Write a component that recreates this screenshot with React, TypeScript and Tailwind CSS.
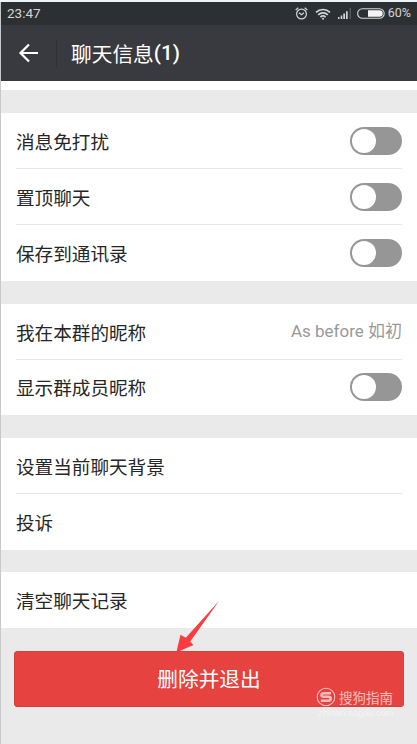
import type { ReactNode } from "react";

const cjk = "font-['Noto_Sans_CJK_SC',sans-serif]";
const latin = "font-[Roboto,'Noto_Sans_CJK_SC',sans-serif]";

function Toggle() {
  return (
    <span className="flex h-7 w-[52px] items-center rounded-full bg-[#969696] pl-0.5">
      <span className="size-6 rounded-full bg-white" />
    </span>
  );
}

function Row({ label, last, children }: { label: string; last?: boolean; children?: ReactNode }) {
  return (
    <div
      className={
        "flex h-14 items-center justify-between " + (last ? "" : "border-b border-[#e6e6e6]")
      }
    >
      <span className="whitespace-nowrap text-[18.6px] leading-7 text-[#262626]">{label}</span>
      {children}
    </div>
  );
}

function Group({ children }: { children: ReactNode }) {
  return <section className="bg-white pl-4 pr-[15px]">{children}</section>;
}

function StatusBar() {
  return (
    <div className={"flex h-[23px] items-center justify-between bg-[#2d3033] pl-[7px] pr-1.5 text-[#d5d5d5] " + latin}>
      <span className="text-[13.5px] leading-none">23:47</span>
      <div className="flex items-center">
        <svg width="13" height="13" viewBox="0 0 13 13" fill="none" stroke="currentColor" strokeWidth="1.2">
          <circle cx="6.5" cy="7" r="4.9" />
          <path d="M.7 3 3.3.8M12.3 3 9.7.8M4 5.7l2.5 2 2.4-2" />
        </svg>
        <svg className="ml-[7px]" width="16" height="12" viewBox="0 0 16 12" fill="none" stroke="currentColor" strokeWidth="1.6">
          <path d="M1 4.3a10.2 10.2 0 0 1 14 0M3.2 6.8a7 7 0 0 1 9.6 0M5.4 9.1a3.9 3.9 0 0 1 5.2 0" />
          <circle cx="8" cy="10.7" r="1" fill="currentColor" stroke="none" />
        </svg>
        <svg className="ml-[7px]" width="14" height="11" viewBox="0 0 14 11" fill="currentColor">
          <path d="M0 9h1.5v2H0zM2.7 7.5h1.6V11H2.7zM5.3 5.5H7V11H5.3zM8 3.2h1.7V11H8z" />
          <path d="M11.5 0H13v11h-1.5z" fill="#55585b" />
        </svg>
        <svg className="ml-[5px]" width="28" height="11" viewBox="0 0 28 11" fill="none">
          <rect x=".6" y=".8" width="26.6" height="9.4" rx="4.7" stroke="currentColor" strokeWidth="1.1" />
          <path d="M11 2.3h11.5a3.2 3.2 0 0 1 0 6.4H11z" fill="#f4f4f4" />
        </svg>
        <span className="ml-[3px] text-[12.5px] leading-none">60%</span>
      </div>
    </div>
  );
}

function Header() {
  return (
    <header className="flex h-14 items-center bg-[#393a3f] pl-[18px] text-white">
      <svg width="21" height="20" viewBox="0 0 21 20" fill="none" stroke="currentColor" strokeWidth="2.2">
        <path d="M20 10H2.5M11 1.5 2.5 10l8.5 8.5" />
      </svg>
      <span className="ml-[17px] h-7 w-px bg-[#303136]" />
      <h1 className="ml-3.5 flex items-center whitespace-nowrap text-[20.7px] leading-8">
        <span>聊天信息</span>
        <span className={"font-medium " + latin}>(1)</span>
      </h1>
    </header>
  );
}

function Watermark() {
  return (
    <div className="absolute left-[316px] top-[687px] w-20 text-white">
      <div className="flex h-5 items-center gap-[3px] opacity-65">
        <svg width="20" height="20" viewBox="0 0 20 20" fill="none" stroke="currentColor">
          <circle cx="10" cy="10" r="8.8" strokeWidth="1.1" />
          <path d="M15 6.2H8C4.5 6.2 4.5 9.8 8 9.8h4c3.7 0 3.7 4 0 4H4.8" strokeWidth="2.4" />
        </svg>
        <span className="whitespace-nowrap text-[13.5px] leading-5">搜狗指南</span>
      </div>
      <div className="pl-0.5 text-[9.3px] leading-3 opacity-50 font-['Liberation_Sans',sans-serif]">zhinan.sogou.com</div>
    </div>
  );
}

export default function App() {
  return (
    <main className={"relative h-[744px] w-[417px] overflow-hidden bg-[#eaeaea] pt-0.5 " + cjk}>
      <StatusBar />
      <Header />
      <div className="h-[9px] bg-white" />
      <div className="flex flex-col gap-[23px] pt-[23px]">
        <Group>
          <Row label="消息免打扰"><Toggle /></Row>
          <Row label="置顶聊天"><Toggle /></Row>
          <Row label="保存到通讯录" last><Toggle /></Row>
        </Group>
        <Group>
          <Row label="我在本群的昵称">
            <span className={"whitespace-nowrap text-[17px] text-[#999] " + latin}>As before 如初</span>
          </Row>
          <div className="-mt-px"><Row label="显示群成员昵称" last><Toggle /></Row></div>
        </Group>
        <Group>
          <Row label="设置当前聊天背景" />
          <Row label="投诉" last />
        </Group>
        <div className="-mt-px">
          <Group><Row label="清空聊天记录" last /></Group>
        </div>
      </div>
      <button className="ml-3.5 mt-[23px] flex h-14 w-[390px] items-center justify-center rounded-[3px] border border-[#d83f3b] bg-[#e64340] text-[20.7px] text-white">
        删除并退出
      </button>
      <svg className="absolute left-[175px] top-[600px]" width="46" height="54" viewBox="0 0 46 54">
        <path d="M44 1 15.5 25.5 5.2 15.5 1.5 52.5 18.5 44.5 15.5 41.5Z" fill="none" />
        <path d="M44.2.8 10.8 37.7 5.5 34.8 1.3 52.5 18.4 45 15.2 41.5Z" fill="#fb3b3d" />
      </svg>
      <Watermark />
      <div className="absolute inset-y-0 left-0 w-px bg-[#c8c8ca]" />
      <div className="absolute inset-x-0 top-0 h-0.5 bg-[#edf4fb]" />
    </main>
  );
}
